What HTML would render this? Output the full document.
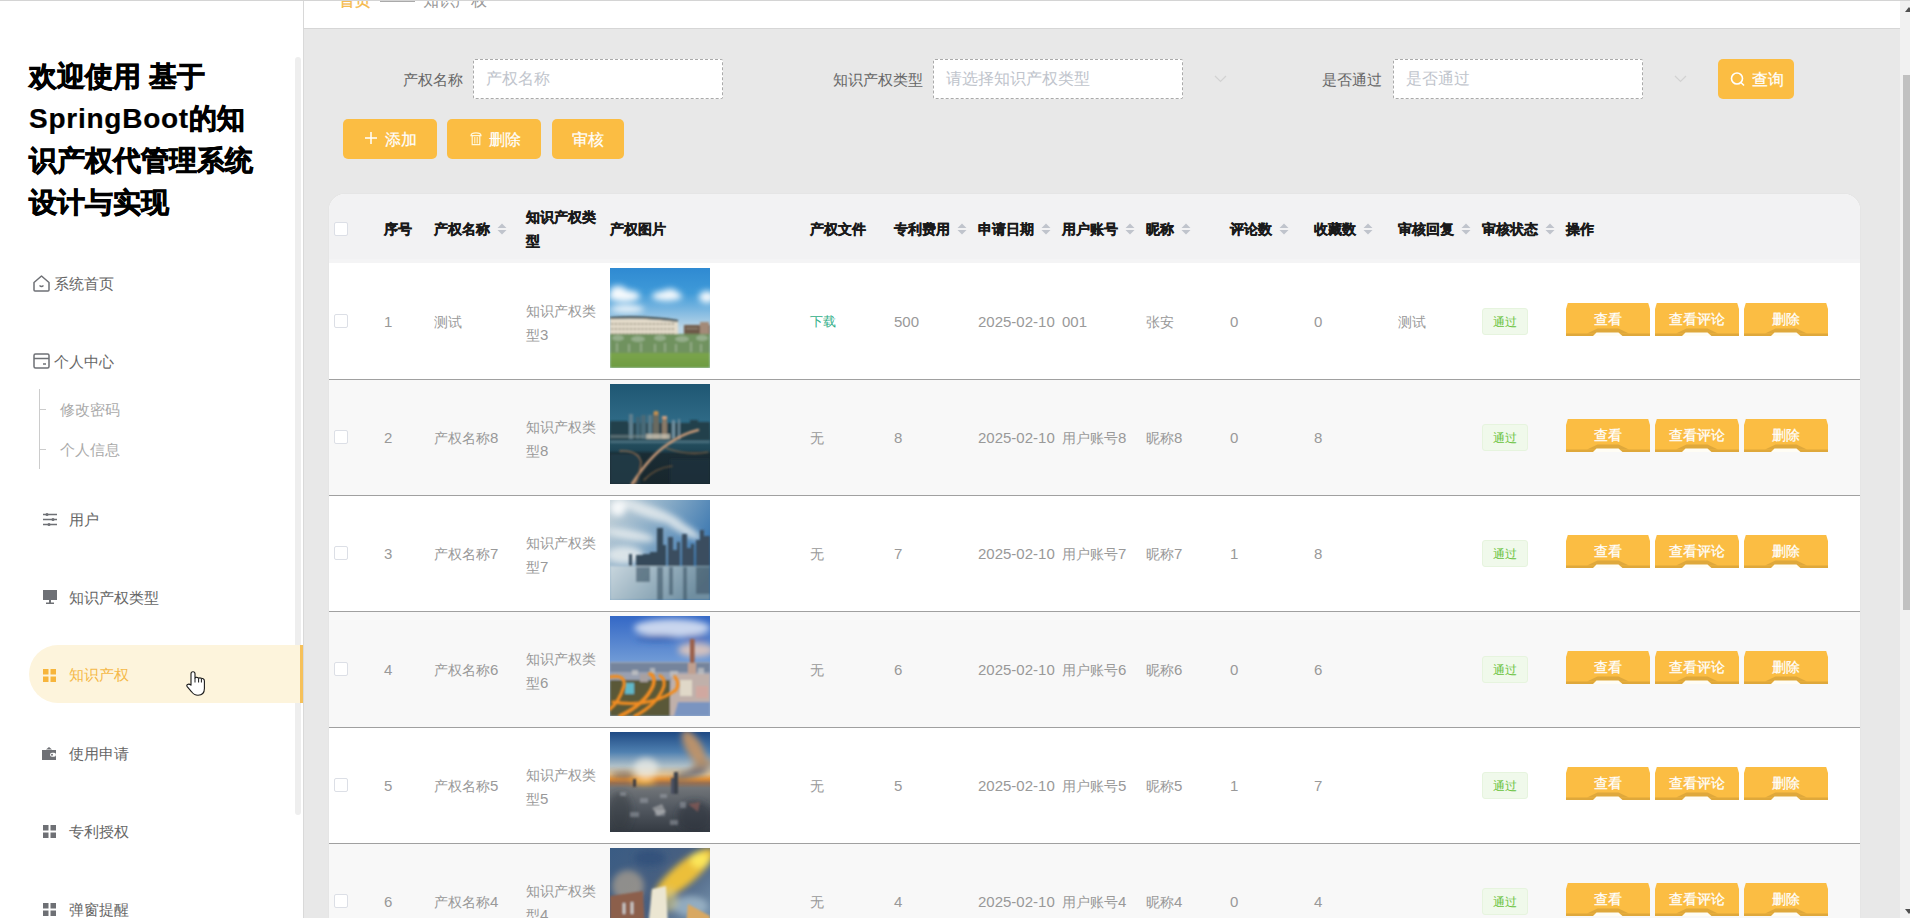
<!DOCTYPE html><html><head><meta charset="utf-8"><style>
*{margin:0;padding:0;box-sizing:border-box}
html,body{width:1910px;height:918px;overflow:hidden;background:#e8e8e8;font-family:"Liberation Sans",sans-serif}
.a{position:absolute;white-space:nowrap}
#side{position:absolute;left:0;top:0;width:303px;height:918px;background:#fff}
#topline{position:absolute;left:0;top:0;width:1910px;height:1px;background:#d4d4d4;z-index:5}
#crumb{position:absolute;left:303px;top:0;width:1597px;height:29px;background:#fff;border-left:1px solid #d8d8d8;border-bottom:1px solid #d6d6d6;overflow:hidden}
.title{left:29px;top:56px;font-size:28px;font-weight:bold;line-height:42px;color:#000;-webkit-text-stroke:0.7px #000}
.mi{font-size:15px;color:#666;line-height:20px}
.sub{font-size:15px;color:#aaa;line-height:20px}
.lbl{font-size:15px;color:#666;line-height:20px}
.inp{position:absolute;background:#fff;border:1px dashed #aaa;height:40px;width:250px;border-radius:2px}
.ph{font-size:16px;color:#c0c4cc;line-height:20px}
.btn{position:absolute;background:#fbbd43;border-radius:5px;height:40px;color:#fff;font-size:16px;line-height:40px}
#tbl{position:absolute;left:329px;top:194px;width:1531px;height:724px;background:#fff;border-radius:16px 16px 0 0;overflow:hidden;box-shadow:0 0 2px rgba(0,0,0,0.06)}
#thead{position:absolute;left:0;top:0;width:1531px;height:69px;background:#f2f2f3;border-bottom:4px solid #f4f4f5}
.th{font-size:14px;font-weight:bold;color:#1a1a1a;line-height:24px;-webkit-text-stroke:0.35px #1a1a1a}
.td{font-size:14px;color:#999;line-height:24px}
.d{font-size:15px}
.row{position:absolute;left:0;width:1531px;height:116px;border-top:1px solid #a0a0a0}
.row.s{background:#f8f8f8}
.cb{position:absolute;width:14px;height:14px;border:1px solid #dcdfe6;background:#fff;border-radius:2px}
.tag{position:absolute;width:46px;height:27px;background:#f0f9eb;border:1px solid #e6f4de;color:#67c23a;font-size:12px;line-height:27px;text-align:center;border-radius:3px}
</style></head><body>
<div id="topline"></div>
<div id="side"></div>
<div class="a title">欢迎使用 基于<br><span style="letter-spacing:0.75px;-webkit-text-stroke:0.2px #000">SpringBoot</span>的知<br>识产权代管理系统<br>设计与实现</div>
<div class="a" style="left:295px;top:57px;width:6px;height:758px;background:#eeeeee;border-radius:3px"></div>
<svg class="a" style="left:33px;top:275px" width="17" height="17" viewBox="0 0 17 17"><path d="M1 7.5 L8.5 1 L16 7.5 V15 a1 1 0 0 1 -1 1 H2 a1 1 0 0 1 -1 -1Z" fill="none" stroke="#6e7075" stroke-width="1.5" stroke-linejoin="round"/><path d="M6.5 10.5 Q8.5 12.5 10.5 10.5" fill="none" stroke="#6e7075" stroke-width="1.3"/></svg>
<div class="a mi" style="left:54px;top:274.0px;">系统首页</div>
<svg class="a" style="left:33px;top:353px" width="17" height="16" viewBox="0 0 17 16"><rect x="1" y="1" width="15" height="14" rx="1.5" fill="none" stroke="#6e7075" stroke-width="1.5"/><path d="M1 5.5 H16" stroke="#6e7075" stroke-width="1.5"/><path d="M10 11 H13" stroke="#6e7075" stroke-width="1.5"/></svg>
<div class="a mi" style="left:54px;top:352.0px;">个人中心</div>
<div class="a" style="left:39px;top:389px;width:1px;height:80px;background:#ccc"></div>
<div class="a" style="left:39px;top:409px;width:7px;height:1px;background:#ccc"></div>
<div class="a" style="left:39px;top:449px;width:7px;height:1px;background:#ccc"></div>
<div class="a sub" style="left:60px;top:400.0px;">修改密码</div>
<div class="a sub" style="left:60px;top:440.0px;">个人信息</div>
<svg class="a" style="left:43px;top:513px" width="14" height="13" viewBox="0 0 14 13"><path d="M0 1.5H14M0 6.5H14M0 11.5H14" stroke="#6e7075" stroke-width="1.3"/><circle cx="4" cy="1.5" r="1.5" fill="#6e7075"/><circle cx="10" cy="6.5" r="1.5" fill="#6e7075"/><circle cx="6" cy="11.5" r="1.5" fill="#6e7075"/></svg>
<div class="a mi" style="left:69px;top:510.0px;">用户</div>
<svg class="a" style="left:43px;top:590px" width="14" height="14" viewBox="0 0 14 14"><rect x="0" y="0" width="14" height="10" fill="#6e7075"/><rect x="6" y="10" width="2" height="3" fill="#6e7075"/><rect x="3" y="12.5" width="8" height="1.5" fill="#6e7075"/></svg>
<div class="a mi" style="left:69px;top:588.0px;">知识产权类型</div>
<div class="a" style="left:29px;top:645px;width:274px;height:58px;background:#fdf4dc;border-radius:29px 0 0 29px"></div>
<div class="a" style="left:300px;top:645px;width:3px;height:58px;background:#f6c15a"></div>
<svg class="a" style="left:43px;top:669px" width="13" height="13" viewBox="0 0 13 13"><rect x="0" y="0" width="5.5" height="5.5" fill="#f7b53b"/><rect x="7.5" y="0" width="5.5" height="5.5" fill="#f7b53b"/><rect x="0" y="7.5" width="5.5" height="5.5" fill="#f7b53b"/><rect x="7.5" y="7.5" width="5.5" height="5.5" fill="#f7b53b"/></svg>
<div class="a mi" style="left:69px;top:665.0px;color:#f5b949">知识产权</div>
<svg class="a" style="left:186px;top:671px" width="20" height="26" viewBox="0 0 20 26"><path d="M5 13 V2.8 a2 2 0 0 1 4 0 V7 Q9.5 6 11 6.4 Q12.3 6.7 12.6 7.2 Q13.8 6.6 15.2 7.2 Q16.2 7.1 17.2 7.8 Q18.4 8.5 18.4 10 V17.5 Q18.4 24.2 12 24.2 Q8 24.2 5.6 20.8 L1.2 15.6 Q0.2 14.2 1.6 13.4 Q3.2 12.6 5 14.2Z" fill="#fff" stroke="#1a1a1a" stroke-width="1.1" stroke-linejoin="round"/><path d="M9 7V11.5M12.6 7.3V11.5M15.4 7.5V11.5" stroke="#1a1a1a" stroke-width="1"/></svg>
<svg class="a" style="left:42px;top:746px" width="14" height="14" viewBox="0 0 14 14"><path d="M7 1 L10 3.5 H4Z" fill="#6e7075"/><rect x="0" y="4" width="14" height="10" fill="#6e7075"/><rect x="8" y="6.8" width="6" height="4" rx="2" fill="#fff"/><circle cx="10" cy="8.8" r="1" fill="#6e7075"/></svg>
<div class="a mi" style="left:69px;top:744.0px;">使用申请</div>
<svg class="a" style="left:43px;top:825px" width="13" height="13" viewBox="0 0 13 13"><rect x="0" y="0" width="5.5" height="5.5" fill="#6e7075"/><rect x="7.5" y="0" width="5.5" height="5.5" fill="#6e7075"/><rect x="0" y="7.5" width="5.5" height="5.5" fill="#6e7075"/><rect x="7.5" y="7.5" width="5.5" height="5.5" fill="#6e7075"/></svg>
<div class="a mi" style="left:69px;top:822.0px;">专利授权</div>
<svg class="a" style="left:43px;top:903px" width="13" height="13" viewBox="0 0 13 13"><rect x="0" y="0" width="5.5" height="5.5" fill="#6e7075"/><rect x="7.5" y="0" width="5.5" height="5.5" fill="#6e7075"/><rect x="0" y="7.5" width="5.5" height="5.5" fill="#6e7075"/><rect x="7.5" y="7.5" width="5.5" height="5.5" fill="#6e7075"/></svg>
<div class="a mi" style="left:69px;top:900.0px;">弹窗提醒</div>
<div class="a" style="left:303px;top:0;width:1px;height:918px;background:#d9d9d9"></div>
<div id="crumb"></div>
<div class="a mi" style="left:339px;top:-9.0px;font-size:16px;color:#f5b949;-webkit-text-stroke:0.3px #f5b949">首页</div>
<div class="a" style="left:380px;top:1px;width:35px;height:1px;background:#aaa"></div>
<div class="a mi" style="left:423px;top:-9.0px;font-size:16px;color:#999">知识产权</div>
<div class="a lbl" style="left:403px;top:70.0px;">产权名称</div>
<div class="inp" style="left:473px;top:59px"></div>
<div class="a ph" style="left:486px;top:69.0px;">产权名称</div>
<div class="a lbl" style="left:833px;top:70.0px;">知识产权类型</div>
<div class="inp" style="left:933px;top:59px"></div>
<div class="a ph" style="left:946px;top:69.0px;">请选择知识产权类型</div>
<svg class="a" style="left:1214px;top:75px" width="13" height="8" viewBox="0 0 13 8"><path d="M1 1 L6.5 6.5 L12 1" fill="none" stroke="#d2d2d2" stroke-width="1.2"/></svg>
<div class="a lbl" style="left:1322px;top:70.0px;">是否通过</div>
<div class="inp" style="left:1393px;top:59px"></div>
<div class="a ph" style="left:1406px;top:69.0px;">是否通过</div>
<svg class="a" style="left:1674px;top:75px" width="13" height="8" viewBox="0 0 13 8"><path d="M1 1 L6.5 6.5 L12 1" fill="none" stroke="#d2d2d2" stroke-width="1.2"/></svg>
<div class="btn" style="left:1718px;top:59px;width:76px"></div>
<svg class="a" style="left:1730px;top:71px" width="16" height="16" viewBox="0 0 16 16"><circle cx="7" cy="7.5" r="5.5" fill="none" stroke="#fff" stroke-width="1.6"/><path d="M11 11.5 L14 14.5" stroke="#fff" stroke-width="1.6"/></svg>
<div class="a mi" style="left:1752px;top:70.0px;font-size:16px;color:#fff;-webkit-text-stroke:0.2px #fff">查询</div>
<div class="btn" style="left:343px;top:119px;width:94px"></div>
<svg class="a" style="left:365px;top:132px" width="12" height="12" viewBox="0 0 12 12"><path d="M6 0V12M0 6H12" stroke="#fff" stroke-width="1.5"/></svg>
<div class="a mi" style="left:385px;top:130.0px;font-size:16px;color:#fff;-webkit-text-stroke:0.2px #fff">添加</div>
<div class="btn" style="left:447px;top:119px;width:94px"></div>
<svg class="a" style="left:470px;top:132px" width="12" height="14" viewBox="0 0 12 14"><path d="M1 3.6 Q1.2 0.9 6 0.9 Q10.8 0.9 11 3.6Z" fill="none" stroke="#fff8dc" stroke-width="1.2"/><path d="M2.2 4 V12.7 H9.8 V4" fill="none" stroke="#fff8dc" stroke-width="1.2"/><path d="M4.8 5V11.5M7.2 5V11.5" stroke="#fff8dc" stroke-width="1"/></svg>
<div class="a mi" style="left:489px;top:130.0px;font-size:16px;color:#fff;-webkit-text-stroke:0.2px #fff">删除</div>
<div class="btn" style="left:552px;top:119px;width:72px"></div>
<div class="a mi" style="left:572px;top:130.0px;font-size:16px;color:#fff;-webkit-text-stroke:0.2px #fff">审核</div>
<div id="tbl"><div id="thead"></div><div class="row" style="top:69px;border-top:none"></div><div class="row s" style="top:185px;"></div><div class="row" style="top:301px;"></div><div class="row s" style="top:417px;"></div><div class="row" style="top:533px;"></div><div class="row s" style="top:649px;"></div></div>
<div class="cb" style="left:334px;top:222px"></div>
<div class="a th" style="left:384px;top:217.0px;">序号</div>
<div class="a th" style="left:434px;top:217.0px;">产权名称</div>
<svg class="a" style="left:497px;top:223px" width="10" height="12" viewBox="0 0 10 12"><path d="M5 0.5 L9.5 5 L0.5 5Z M5 11.5 L9.5 7 L0.5 7Z" fill="#c0c4cc"/></svg>
<div class="a th" style="left:610px;top:217.0px;">产权图片</div>
<div class="a th" style="left:810px;top:217.0px;">产权文件</div>
<div class="a th" style="left:894px;top:217.0px;">专利费用</div>
<svg class="a" style="left:957px;top:223px" width="10" height="12" viewBox="0 0 10 12"><path d="M5 0.5 L9.5 5 L0.5 5Z M5 11.5 L9.5 7 L0.5 7Z" fill="#c0c4cc"/></svg>
<div class="a th" style="left:978px;top:217.0px;">申请日期</div>
<svg class="a" style="left:1041px;top:223px" width="10" height="12" viewBox="0 0 10 12"><path d="M5 0.5 L9.5 5 L0.5 5Z M5 11.5 L9.5 7 L0.5 7Z" fill="#c0c4cc"/></svg>
<div class="a th" style="left:1062px;top:217.0px;">用户账号</div>
<svg class="a" style="left:1125px;top:223px" width="10" height="12" viewBox="0 0 10 12"><path d="M5 0.5 L9.5 5 L0.5 5Z M5 11.5 L9.5 7 L0.5 7Z" fill="#c0c4cc"/></svg>
<div class="a th" style="left:1146px;top:217.0px;">昵称</div>
<svg class="a" style="left:1181px;top:223px" width="10" height="12" viewBox="0 0 10 12"><path d="M5 0.5 L9.5 5 L0.5 5Z M5 11.5 L9.5 7 L0.5 7Z" fill="#c0c4cc"/></svg>
<div class="a th" style="left:1230px;top:217.0px;">评论数</div>
<svg class="a" style="left:1279px;top:223px" width="10" height="12" viewBox="0 0 10 12"><path d="M5 0.5 L9.5 5 L0.5 5Z M5 11.5 L9.5 7 L0.5 7Z" fill="#c0c4cc"/></svg>
<div class="a th" style="left:1314px;top:217.0px;">收藏数</div>
<svg class="a" style="left:1363px;top:223px" width="10" height="12" viewBox="0 0 10 12"><path d="M5 0.5 L9.5 5 L0.5 5Z M5 11.5 L9.5 7 L0.5 7Z" fill="#c0c4cc"/></svg>
<div class="a th" style="left:1398px;top:217.0px;">审核回复</div>
<svg class="a" style="left:1461px;top:223px" width="10" height="12" viewBox="0 0 10 12"><path d="M5 0.5 L9.5 5 L0.5 5Z M5 11.5 L9.5 7 L0.5 7Z" fill="#c0c4cc"/></svg>
<div class="a th" style="left:1482px;top:217.0px;">审核状态</div>
<svg class="a" style="left:1545px;top:223px" width="10" height="12" viewBox="0 0 10 12"><path d="M5 0.5 L9.5 5 L0.5 5Z M5 11.5 L9.5 7 L0.5 7Z" fill="#c0c4cc"/></svg>
<div class="a th" style="left:1566px;top:217.0px;">操作</div>
<div class="a th" style="left:526px;top:205px;white-space:normal;width:72px">知识产权类型</div>
<div class="cb" style="left:334px;top:314px"></div>
<div class="a td" style="left:384px;top:310.0px;"><span class="d">1</span></div>
<div class="a td" style="left:434px;top:310.0px;">测试</div>
<div class="a td" style="left:526px;top:299px;white-space:normal;width:72px">知识产权类<br>型<span class="d">3</span></div>
<div class="a" style="left:610px;top:268px;width:100px;height:100px"><svg width="100" height="100" viewBox="0 0 100 100" style="display:block"><defs><filter id="b1" x="-20%" y="-20%" width="140%" height="140%"><feGaussianBlur stdDeviation="1.2"/></filter><filter id="c1" x="-50%" y="-50%" width="200%" height="200%"><feGaussianBlur stdDeviation="3"/></filter><linearGradient id="s1" x1="0" y1="0" x2="0" y2="1"><stop offset="0" stop-color="#2f8ad2"/><stop offset="0.25" stop-color="#3f9ad8"/><stop offset="0.45" stop-color="#86bce2"/><stop offset="0.6" stop-color="#bcd6e6"/></linearGradient><linearGradient id="g1" x1="0" y1="0" x2="0" y2="1"><stop offset="0" stop-color="#7aa44a"/><stop offset="1" stop-color="#6f9c42"/></linearGradient></defs><rect width="100" height="100" fill="url(#s1)"/><g filter="url(#c1)" fill="#fff" opacity="0.95"><ellipse cx="14" cy="28" rx="16" ry="6"/><ellipse cx="8" cy="22" rx="8" ry="4"/><ellipse cx="57" cy="28" rx="15" ry="5"/><ellipse cx="60" cy="24" rx="7" ry="3"/><ellipse cx="97" cy="29" rx="8" ry="6"/><ellipse cx="17" cy="41" rx="17" ry="3.5"/></g><g filter="url(#b1)"><path d="M0 51 Q35 49 68 54 V71 H0Z" fill="#e4dccb"/><path d="M0 50 Q35 48 68 53" fill="none" stroke="#3b4444" stroke-width="2.2"/><path d="M1 56 H65 M1 61 H65 M1 66 H65" stroke="#8e8676" stroke-width="1.4" stroke-dasharray="2.2 1.6"/><rect x="74" y="57" width="26" height="14" fill="#6e5a4a"/><rect x="90" y="54" width="9" height="16" fill="#a38a78"/><rect x="76" y="60" width="12" height="1" fill="#9a8a7a"/><rect x="0" y="66" width="100" height="19" fill="#70925f"/><g fill="#9fb596" opacity="0.8"><ellipse cx="8" cy="70" rx="6" ry="3"/><ellipse cx="28" cy="71" rx="7" ry="3"/><ellipse cx="50" cy="70" rx="6" ry="3"/><ellipse cx="72" cy="71" rx="7" ry="3"/><ellipse cx="92" cy="70" rx="6" ry="3"/></g><path d="M7 75V84M19 76V84M31 75V84M45 76V84M55 75V84M66 76V84M81 74V84M91 76V84" stroke="#c8d0c0" stroke-width="0.8"/><rect x="0" y="85" width="100" height="15" fill="url(#g1)"/></g></svg></div>
<div class="a td" style="left:810px;top:310.0px;color:#2fae87;font-size:13px">下载</div>
<div class="a td" style="left:894px;top:310.0px;"><span class="d">500</span></div>
<div class="a td" style="left:978px;top:310.0px;"><span class="d">2025-02-10</span></div>
<div class="a td" style="left:1062px;top:310.0px;"><span class="d">001</span></div>
<div class="a td" style="left:1146px;top:310.0px;">张安</div>
<div class="a td" style="left:1230px;top:310.0px;"><span class="d">0</span></div>
<div class="a td" style="left:1314px;top:310.0px;"><span class="d">0</span></div>
<div class="a td" style="left:1398px;top:310.0px;">测试</div>
<div class="tag" style="left:1482px;top:308px">通过</div>
<svg class="a" style="left:1566px;top:303px" width="84" height="33" viewBox="0 0 84 33"><path d="M1.8 0 H82.2 L84 6 V33 H0 V6Z" fill="#fbbd43"/><path d="M0 30.5 H84 V33 H0Z" fill="#dfa83b"/><path d="M21 30.6 L31.5 25.4 H52.5 L63 30.6Z" fill="#dfa83b"/><path d="M27 33 L30.5 29.6 H52.5 L56.5 33Z" fill="#fffdf5"/></svg>
<div class="a" style="left:1566px;top:309px;width:84px;text-align:center;font-size:14px;line-height:20px;color:#fff;-webkit-text-stroke:0.25px #fff">查看</div>
<svg class="a" style="left:1655px;top:303px" width="84" height="33" viewBox="0 0 84 33"><path d="M1.8 0 H82.2 L84 6 V33 H0 V6Z" fill="#fbbd43"/><path d="M0 30.5 H84 V33 H0Z" fill="#dfa83b"/><path d="M21 30.6 L31.5 25.4 H52.5 L63 30.6Z" fill="#dfa83b"/><path d="M27 33 L30.5 29.6 H52.5 L56.5 33Z" fill="#fffdf5"/></svg>
<div class="a" style="left:1655px;top:309px;width:84px;text-align:center;font-size:14px;line-height:20px;color:#fff;-webkit-text-stroke:0.25px #fff">查看评论</div>
<svg class="a" style="left:1744px;top:303px" width="84" height="33" viewBox="0 0 84 33"><path d="M1.8 0 H82.2 L84 6 V33 H0 V6Z" fill="#fbbd43"/><path d="M0 30.5 H84 V33 H0Z" fill="#dfa83b"/><path d="M21 30.6 L31.5 25.4 H52.5 L63 30.6Z" fill="#dfa83b"/><path d="M27 33 L30.5 29.6 H52.5 L56.5 33Z" fill="#fffdf5"/></svg>
<div class="a" style="left:1744px;top:309px;width:84px;text-align:center;font-size:14px;line-height:20px;color:#fff;-webkit-text-stroke:0.25px #fff">删除</div>
<div class="cb" style="left:334px;top:430px"></div>
<div class="a td" style="left:384px;top:426.0px;"><span class="d">2</span></div>
<div class="a td" style="left:434px;top:426.0px;">产权名称<span class="d">8</span></div>
<div class="a td" style="left:526px;top:415px;white-space:normal;width:72px">知识产权类<br>型<span class="d">8</span></div>
<div class="a" style="left:610px;top:384px;width:100px;height:100px"><svg width="100" height="100" viewBox="0 0 100 100" style="display:block"><defs><filter id="b2" x="-20%" y="-20%" width="140%" height="140%"><feGaussianBlur stdDeviation="1.2"/></filter><filter id="c2" x="-50%" y="-50%" width="200%" height="200%"><feGaussianBlur stdDeviation="3"/></filter><linearGradient id="s2" x1="0" y1="0" x2="0" y2="1"><stop offset="0" stop-color="#1f5773"/><stop offset="0.38" stop-color="#2f6a86"/><stop offset="0.5" stop-color="#2a5868"/><stop offset="0.66" stop-color="#1f4656"/><stop offset="0.7" stop-color="#1a2c34"/><stop offset="1" stop-color="#18262c"/></linearGradient></defs><rect width="100" height="100" fill="url(#s2)"/><g filter="url(#b2)"><path d="M0 37 H18 V39 H80 V36 H88 V38 H100 V56 H0Z" fill="#21404b"/><rect x="19" y="30" width="4" height="25" fill="#5f7f8e"/><rect x="26" y="33" width="4" height="22" fill="#3f6575"/><rect x="31" y="31" width="5" height="24" fill="#4a6a78"/><rect x="38" y="31" width="4" height="24" fill="#5a7a88"/><rect x="43" y="28" width="6" height="27" fill="#6a6a60"/><rect x="44" y="27" width="4" height="4" fill="#c09050"/><rect x="52" y="33" width="5" height="22" fill="#8a7a68"/><rect x="52" y="32" width="5" height="3" fill="#d0a080"/><rect x="62" y="36" width="3" height="19" fill="#7090a0"/><rect x="68" y="35" width="2" height="20" fill="#6a8898"/><rect x="36" y="50" width="24" height="5" fill="#c8c0b0" opacity="0.8"/><rect x="0" y="51" width="35" height="3" fill="#7a8a8a" opacity="0.6"/><rect x="0" y="57" width="100" height="2" fill="#6a8a98" opacity="0.6"/><rect x="0" y="70" width="30" height="30" fill="#24404c" opacity="0.7"/><rect x="60" y="75" width="40" height="25" fill="#203440" opacity="0.6"/></g><g filter="url(#b2)" fill="none" stroke-linecap="round"><path d="M22 100 Q40 72 58 60 Q72 50 88 46" stroke="#c89a78" stroke-width="2.6"/><path d="M10 67 Q28 66 31 78 Q30 90 25 100" stroke="#9a7050" stroke-width="1.3"/><path d="M56 64 Q78 72 98 68" stroke="#8a6848" stroke-width="1.2"/><path d="M34 96 Q45 84 62 82" stroke="#806040" stroke-width="1.2"/></g></svg></div>
<div class="a td" style="left:810px;top:426.0px;">无</div>
<div class="a td" style="left:894px;top:426.0px;"><span class="d">8</span></div>
<div class="a td" style="left:978px;top:426.0px;"><span class="d">2025-02-10</span></div>
<div class="a td" style="left:1062px;top:426.0px;">用户账号<span class="d">8</span></div>
<div class="a td" style="left:1146px;top:426.0px;">昵称<span class="d">8</span></div>
<div class="a td" style="left:1230px;top:426.0px;"><span class="d">0</span></div>
<div class="a td" style="left:1314px;top:426.0px;"><span class="d">8</span></div>
<div class="tag" style="left:1482px;top:424px">通过</div>
<svg class="a" style="left:1566px;top:419px" width="84" height="33" viewBox="0 0 84 33"><path d="M1.8 0 H82.2 L84 6 V33 H0 V6Z" fill="#fbbd43"/><path d="M0 30.5 H84 V33 H0Z" fill="#dfa83b"/><path d="M21 30.6 L31.5 25.4 H52.5 L63 30.6Z" fill="#dfa83b"/><path d="M27 33 L30.5 29.6 H52.5 L56.5 33Z" fill="#fffdf5"/></svg>
<div class="a" style="left:1566px;top:425px;width:84px;text-align:center;font-size:14px;line-height:20px;color:#fff;-webkit-text-stroke:0.25px #fff">查看</div>
<svg class="a" style="left:1655px;top:419px" width="84" height="33" viewBox="0 0 84 33"><path d="M1.8 0 H82.2 L84 6 V33 H0 V6Z" fill="#fbbd43"/><path d="M0 30.5 H84 V33 H0Z" fill="#dfa83b"/><path d="M21 30.6 L31.5 25.4 H52.5 L63 30.6Z" fill="#dfa83b"/><path d="M27 33 L30.5 29.6 H52.5 L56.5 33Z" fill="#fffdf5"/></svg>
<div class="a" style="left:1655px;top:425px;width:84px;text-align:center;font-size:14px;line-height:20px;color:#fff;-webkit-text-stroke:0.25px #fff">查看评论</div>
<svg class="a" style="left:1744px;top:419px" width="84" height="33" viewBox="0 0 84 33"><path d="M1.8 0 H82.2 L84 6 V33 H0 V6Z" fill="#fbbd43"/><path d="M0 30.5 H84 V33 H0Z" fill="#dfa83b"/><path d="M21 30.6 L31.5 25.4 H52.5 L63 30.6Z" fill="#dfa83b"/><path d="M27 33 L30.5 29.6 H52.5 L56.5 33Z" fill="#fffdf5"/></svg>
<div class="a" style="left:1744px;top:425px;width:84px;text-align:center;font-size:14px;line-height:20px;color:#fff;-webkit-text-stroke:0.25px #fff">删除</div>
<div class="cb" style="left:334px;top:546px"></div>
<div class="a td" style="left:384px;top:542.0px;"><span class="d">3</span></div>
<div class="a td" style="left:434px;top:542.0px;">产权名称<span class="d">7</span></div>
<div class="a td" style="left:526px;top:531px;white-space:normal;width:72px">知识产权类<br>型<span class="d">7</span></div>
<div class="a" style="left:610px;top:500px;width:100px;height:100px"><svg width="100" height="100" viewBox="0 0 100 100" style="display:block"><defs><filter id="b3" x="-20%" y="-20%" width="140%" height="140%"><feGaussianBlur stdDeviation="1.2"/></filter><filter id="c3" x="-50%" y="-50%" width="200%" height="200%"><feGaussianBlur stdDeviation="3"/></filter><linearGradient id="s3" x1="0" y1="0" x2="1" y2="0.6"><stop offset="0" stop-color="#c8d4da"/><stop offset="0.45" stop-color="#86aac6"/><stop offset="1" stop-color="#2e6eac"/></linearGradient><linearGradient id="w3" x1="0" y1="0" x2="1" y2="0.3"><stop offset="0" stop-color="#c8d6de"/><stop offset="0.5" stop-color="#9ab2c0"/><stop offset="1" stop-color="#6f8ea0"/></linearGradient></defs><rect width="100" height="100" fill="url(#s3)"/><g filter="url(#c3)" fill="#e6ecee" opacity="0.85"><ellipse cx="40" cy="12" rx="35" ry="6" transform="rotate(20 40 12)"/><ellipse cx="20" cy="35" rx="25" ry="5" transform="rotate(10 20 35)"/><ellipse cx="72" cy="28" rx="22" ry="5" transform="rotate(30 72 28)"/><ellipse cx="8" cy="8" rx="8" ry="8" fill="#fff"/><ellipse cx="15" cy="55" rx="18" ry="9"/></g><g filter="url(#b3)"><path d="M19 66 V54 H22 V66Z M26 66 V55 H33 V54 H40 V52 H47 V28 H53 V45 H56 V66Z" fill="#34495a"/><path d="M58 66 V37 H63 V50 H67 V42 H70 V66Z M72 66 V34 H77 V48 H81 V44 H84 V66Z M86 66 V40 H90 V30 H94 V36 H100 V66Z" fill="#3a4e5e"/><rect x="0" y="66" width="100" height="34" fill="url(#w3)"/><path d="M26 67 H40 V82 H26Z M47 67 H53 V100 H47Z M59 67 H63 V95 H59Z M73 67 H77 V100 H73Z M86 67 H100 V94 H86Z" fill="#40596a" opacity="0.65"/></g></svg></div>
<div class="a td" style="left:810px;top:542.0px;">无</div>
<div class="a td" style="left:894px;top:542.0px;"><span class="d">7</span></div>
<div class="a td" style="left:978px;top:542.0px;"><span class="d">2025-02-10</span></div>
<div class="a td" style="left:1062px;top:542.0px;">用户账号<span class="d">7</span></div>
<div class="a td" style="left:1146px;top:542.0px;">昵称<span class="d">7</span></div>
<div class="a td" style="left:1230px;top:542.0px;"><span class="d">1</span></div>
<div class="a td" style="left:1314px;top:542.0px;"><span class="d">8</span></div>
<div class="tag" style="left:1482px;top:540px">通过</div>
<svg class="a" style="left:1566px;top:535px" width="84" height="33" viewBox="0 0 84 33"><path d="M1.8 0 H82.2 L84 6 V33 H0 V6Z" fill="#fbbd43"/><path d="M0 30.5 H84 V33 H0Z" fill="#dfa83b"/><path d="M21 30.6 L31.5 25.4 H52.5 L63 30.6Z" fill="#dfa83b"/><path d="M27 33 L30.5 29.6 H52.5 L56.5 33Z" fill="#fffdf5"/></svg>
<div class="a" style="left:1566px;top:541px;width:84px;text-align:center;font-size:14px;line-height:20px;color:#fff;-webkit-text-stroke:0.25px #fff">查看</div>
<svg class="a" style="left:1655px;top:535px" width="84" height="33" viewBox="0 0 84 33"><path d="M1.8 0 H82.2 L84 6 V33 H0 V6Z" fill="#fbbd43"/><path d="M0 30.5 H84 V33 H0Z" fill="#dfa83b"/><path d="M21 30.6 L31.5 25.4 H52.5 L63 30.6Z" fill="#dfa83b"/><path d="M27 33 L30.5 29.6 H52.5 L56.5 33Z" fill="#fffdf5"/></svg>
<div class="a" style="left:1655px;top:541px;width:84px;text-align:center;font-size:14px;line-height:20px;color:#fff;-webkit-text-stroke:0.25px #fff">查看评论</div>
<svg class="a" style="left:1744px;top:535px" width="84" height="33" viewBox="0 0 84 33"><path d="M1.8 0 H82.2 L84 6 V33 H0 V6Z" fill="#fbbd43"/><path d="M0 30.5 H84 V33 H0Z" fill="#dfa83b"/><path d="M21 30.6 L31.5 25.4 H52.5 L63 30.6Z" fill="#dfa83b"/><path d="M27 33 L30.5 29.6 H52.5 L56.5 33Z" fill="#fffdf5"/></svg>
<div class="a" style="left:1744px;top:541px;width:84px;text-align:center;font-size:14px;line-height:20px;color:#fff;-webkit-text-stroke:0.25px #fff">删除</div>
<div class="cb" style="left:334px;top:662px"></div>
<div class="a td" style="left:384px;top:658.0px;"><span class="d">4</span></div>
<div class="a td" style="left:434px;top:658.0px;">产权名称<span class="d">6</span></div>
<div class="a td" style="left:526px;top:647px;white-space:normal;width:72px">知识产权类<br>型<span class="d">6</span></div>
<div class="a" style="left:610px;top:616px;width:100px;height:100px"><svg width="100" height="100" viewBox="0 0 100 100" style="display:block"><defs><filter id="b4" x="-20%" y="-20%" width="140%" height="140%"><feGaussianBlur stdDeviation="1.2"/></filter><filter id="c4" x="-50%" y="-50%" width="200%" height="200%"><feGaussianBlur stdDeviation="3"/></filter><linearGradient id="s4" x1="0" y1="0" x2="0" y2="1"><stop offset="0" stop-color="#3468c6"/><stop offset="0.45" stop-color="#6f9ad6"/><stop offset="0.5" stop-color="#98aed0"/></linearGradient></defs><rect width="100" height="100" fill="url(#s4)"/><g filter="url(#c4)"><ellipse cx="62" cy="12" rx="38" ry="9" fill="#dfe6f4" opacity="0.85"/><ellipse cx="86" cy="34" rx="18" ry="7" fill="#e8cabb" opacity="0.85"/><ellipse cx="48" cy="22" rx="22" ry="3" fill="#2e5eb0"/><ellipse cx="85" cy="22" rx="14" ry="3" fill="#4a6ab8"/></g><g filter="url(#b4)"><rect x="0" y="46" width="100" height="54" fill="#9aa0b0"/><path d="M0 47 H100 V56 H0Z" fill="#74849c"/><g fill="#c8c8c8" opacity="0.7"><rect x="22" y="54" width="6" height="5"/><rect x="40" y="52" width="5" height="6"/><rect x="60" y="55" width="8" height="6"/><rect x="88" y="52" width="6" height="8"/></g><rect x="80" y="23" width="4.5" height="32" fill="#9a5e48"/><rect x="78" y="47" width="8" height="12" fill="#c0a090"/><path d="M62 58 H100 V100 H58Z" fill="#c0b0aa"/><path d="M70 64 H82 V80 H70Z" fill="#e0d8c8"/><path d="M86 70 H98 V82 H86Z" fill="#d0a8a0"/><path d="M68 86 H100 V100 H64Z" fill="#7a94c0"/><path d="M0 64 H60 V100 H0Z" fill="#5a5838"/><rect x="15" y="67" width="9" height="11" fill="#60b8c8"/><rect x="30" y="58" width="8" height="8" fill="#a8a0a0"/></g><g filter="url(#b4)" fill="none" stroke="#f08c22" stroke-linecap="round"><path d="M0 61 Q16 58 14 70 Q9 86 0 93" stroke-width="3.2"/><path d="M10 100 Q35 88 43 70 Q46 60 40 58" stroke-width="3.8"/><path d="M25 100 Q48 88 54 70 Q55 62 50 60" stroke-width="3.2"/><path d="M3 86 Q40 92 66 74 Q70 67 65 61" stroke-width="3.2"/></g></svg></div>
<div class="a td" style="left:810px;top:658.0px;">无</div>
<div class="a td" style="left:894px;top:658.0px;"><span class="d">6</span></div>
<div class="a td" style="left:978px;top:658.0px;"><span class="d">2025-02-10</span></div>
<div class="a td" style="left:1062px;top:658.0px;">用户账号<span class="d">6</span></div>
<div class="a td" style="left:1146px;top:658.0px;">昵称<span class="d">6</span></div>
<div class="a td" style="left:1230px;top:658.0px;"><span class="d">0</span></div>
<div class="a td" style="left:1314px;top:658.0px;"><span class="d">6</span></div>
<div class="tag" style="left:1482px;top:656px">通过</div>
<svg class="a" style="left:1566px;top:651px" width="84" height="33" viewBox="0 0 84 33"><path d="M1.8 0 H82.2 L84 6 V33 H0 V6Z" fill="#fbbd43"/><path d="M0 30.5 H84 V33 H0Z" fill="#dfa83b"/><path d="M21 30.6 L31.5 25.4 H52.5 L63 30.6Z" fill="#dfa83b"/><path d="M27 33 L30.5 29.6 H52.5 L56.5 33Z" fill="#fffdf5"/></svg>
<div class="a" style="left:1566px;top:657px;width:84px;text-align:center;font-size:14px;line-height:20px;color:#fff;-webkit-text-stroke:0.25px #fff">查看</div>
<svg class="a" style="left:1655px;top:651px" width="84" height="33" viewBox="0 0 84 33"><path d="M1.8 0 H82.2 L84 6 V33 H0 V6Z" fill="#fbbd43"/><path d="M0 30.5 H84 V33 H0Z" fill="#dfa83b"/><path d="M21 30.6 L31.5 25.4 H52.5 L63 30.6Z" fill="#dfa83b"/><path d="M27 33 L30.5 29.6 H52.5 L56.5 33Z" fill="#fffdf5"/></svg>
<div class="a" style="left:1655px;top:657px;width:84px;text-align:center;font-size:14px;line-height:20px;color:#fff;-webkit-text-stroke:0.25px #fff">查看评论</div>
<svg class="a" style="left:1744px;top:651px" width="84" height="33" viewBox="0 0 84 33"><path d="M1.8 0 H82.2 L84 6 V33 H0 V6Z" fill="#fbbd43"/><path d="M0 30.5 H84 V33 H0Z" fill="#dfa83b"/><path d="M21 30.6 L31.5 25.4 H52.5 L63 30.6Z" fill="#dfa83b"/><path d="M27 33 L30.5 29.6 H52.5 L56.5 33Z" fill="#fffdf5"/></svg>
<div class="a" style="left:1744px;top:657px;width:84px;text-align:center;font-size:14px;line-height:20px;color:#fff;-webkit-text-stroke:0.25px #fff">删除</div>
<div class="cb" style="left:334px;top:778px"></div>
<div class="a td" style="left:384px;top:774.0px;"><span class="d">5</span></div>
<div class="a td" style="left:434px;top:774.0px;">产权名称<span class="d">5</span></div>
<div class="a td" style="left:526px;top:763px;white-space:normal;width:72px">知识产权类<br>型<span class="d">5</span></div>
<div class="a" style="left:610px;top:732px;width:100px;height:100px"><svg width="100" height="100" viewBox="0 0 100 100" style="display:block"><defs><filter id="b5" x="-20%" y="-20%" width="140%" height="140%"><feGaussianBlur stdDeviation="1.2"/></filter><filter id="c5" x="-50%" y="-50%" width="200%" height="200%"><feGaussianBlur stdDeviation="3"/></filter><linearGradient id="s5" x1="0" y1="0" x2="0" y2="1"><stop offset="0" stop-color="#1f4a84"/><stop offset="0.2" stop-color="#4f80b0"/><stop offset="0.34" stop-color="#b0c0c8"/><stop offset="0.42" stop-color="#e0c090"/><stop offset="0.47" stop-color="#e09038"/><stop offset="0.51" stop-color="#9a7050"/><stop offset="0.56" stop-color="#707478"/><stop offset="0.75" stop-color="#545a62"/><stop offset="1" stop-color="#343a42"/></linearGradient></defs><rect width="100" height="100" fill="url(#s5)"/><g filter="url(#c5)"><ellipse cx="36" cy="36" rx="12" ry="10" fill="#f0f0e8" opacity="0.7"/><ellipse cx="84" cy="16" rx="20" ry="8" transform="rotate(60 84 16)" fill="#c09468" opacity="0.95"/><ellipse cx="92" cy="34" rx="12" ry="6" transform="rotate(-20 92 34)" fill="#a88868" opacity="0.8"/><ellipse cx="80" cy="42" rx="18" ry="4" transform="rotate(-15 80 42)" fill="#5a6478" opacity="0.8"/><ellipse cx="34" cy="49" rx="12" ry="3" fill="#ffc040"/><ellipse cx="14" cy="43" rx="13" ry="2.5" fill="#504850" opacity="0.8"/><ellipse cx="85" cy="85" rx="18" ry="16" fill="#2e343c" opacity="0.6"/><ellipse cx="10" cy="80" rx="12" ry="20" fill="#30363e" opacity="0.5"/></g><g filter="url(#b5)"><rect x="64" y="40" width="4" height="22" fill="#3a404a"/><rect x="61" y="46" width="3" height="16" fill="#4a5060"/><rect x="23" y="47" width="3" height="8" fill="#3a3a40"/><g fill="#a8aeb6" opacity="0.45"><rect x="10" y="60" width="6" height="4"/><rect x="30" y="66" width="8" height="5"/><rect x="50" y="62" width="7" height="4"/><rect x="70" y="70" width="6" height="6"/><rect x="20" y="80" width="9" height="5"/><rect x="45" y="78" width="10" height="6"/><rect x="60" y="88" width="8" height="5"/></g><path d="M42 76 L52 72 L56 80 L48 84Z" fill="#c8c8c8" opacity="0.5"/><path d="M78 72 L90 70 L88 80Z" fill="#9a6058" opacity="0.6"/></g></svg></div>
<div class="a td" style="left:810px;top:774.0px;">无</div>
<div class="a td" style="left:894px;top:774.0px;"><span class="d">5</span></div>
<div class="a td" style="left:978px;top:774.0px;"><span class="d">2025-02-10</span></div>
<div class="a td" style="left:1062px;top:774.0px;">用户账号<span class="d">5</span></div>
<div class="a td" style="left:1146px;top:774.0px;">昵称<span class="d">5</span></div>
<div class="a td" style="left:1230px;top:774.0px;"><span class="d">1</span></div>
<div class="a td" style="left:1314px;top:774.0px;"><span class="d">7</span></div>
<div class="tag" style="left:1482px;top:772px">通过</div>
<svg class="a" style="left:1566px;top:767px" width="84" height="33" viewBox="0 0 84 33"><path d="M1.8 0 H82.2 L84 6 V33 H0 V6Z" fill="#fbbd43"/><path d="M0 30.5 H84 V33 H0Z" fill="#dfa83b"/><path d="M21 30.6 L31.5 25.4 H52.5 L63 30.6Z" fill="#dfa83b"/><path d="M27 33 L30.5 29.6 H52.5 L56.5 33Z" fill="#fffdf5"/></svg>
<div class="a" style="left:1566px;top:773px;width:84px;text-align:center;font-size:14px;line-height:20px;color:#fff;-webkit-text-stroke:0.25px #fff">查看</div>
<svg class="a" style="left:1655px;top:767px" width="84" height="33" viewBox="0 0 84 33"><path d="M1.8 0 H82.2 L84 6 V33 H0 V6Z" fill="#fbbd43"/><path d="M0 30.5 H84 V33 H0Z" fill="#dfa83b"/><path d="M21 30.6 L31.5 25.4 H52.5 L63 30.6Z" fill="#dfa83b"/><path d="M27 33 L30.5 29.6 H52.5 L56.5 33Z" fill="#fffdf5"/></svg>
<div class="a" style="left:1655px;top:773px;width:84px;text-align:center;font-size:14px;line-height:20px;color:#fff;-webkit-text-stroke:0.25px #fff">查看评论</div>
<svg class="a" style="left:1744px;top:767px" width="84" height="33" viewBox="0 0 84 33"><path d="M1.8 0 H82.2 L84 6 V33 H0 V6Z" fill="#fbbd43"/><path d="M0 30.5 H84 V33 H0Z" fill="#dfa83b"/><path d="M21 30.6 L31.5 25.4 H52.5 L63 30.6Z" fill="#dfa83b"/><path d="M27 33 L30.5 29.6 H52.5 L56.5 33Z" fill="#fffdf5"/></svg>
<div class="a" style="left:1744px;top:773px;width:84px;text-align:center;font-size:14px;line-height:20px;color:#fff;-webkit-text-stroke:0.25px #fff">删除</div>
<div class="cb" style="left:334px;top:894px"></div>
<div class="a td" style="left:384px;top:890.0px;"><span class="d">6</span></div>
<div class="a td" style="left:434px;top:890.0px;">产权名称<span class="d">4</span></div>
<div class="a td" style="left:526px;top:879px;white-space:normal;width:72px">知识产权类<br>型<span class="d">4</span></div>
<div class="a" style="left:610px;top:848px;width:100px;height:100px"><svg width="100" height="100" viewBox="0 0 100 100" style="display:block"><defs><filter id="b6" x="-20%" y="-20%" width="140%" height="140%"><feGaussianBlur stdDeviation="1.2"/></filter><filter id="c6" x="-50%" y="-50%" width="200%" height="200%"><feGaussianBlur stdDeviation="3"/></filter><linearGradient id="s6" x1="0" y1="0" x2="1" y2="1"><stop offset="0" stop-color="#3a5c84"/><stop offset="0.5" stop-color="#4a6080"/><stop offset="1" stop-color="#88a8c0"/></linearGradient></defs><rect width="100" height="100" fill="url(#s6)"/><g filter="url(#c6)"><ellipse cx="74" cy="26" rx="38" ry="11" transform="rotate(-40 74 26)" fill="#f4c436" opacity="0.95"/><ellipse cx="90" cy="12" rx="10" ry="8" fill="#fff060" opacity="0.8"/><ellipse cx="18" cy="38" rx="16" ry="16" fill="#b8a890" opacity="0.65"/><ellipse cx="80" cy="58" rx="18" ry="10" fill="#a8c0d0" opacity="0.7"/><ellipse cx="58" cy="52" rx="10" ry="12" fill="#d0c888" opacity="0.6"/><ellipse cx="40" cy="10" rx="16" ry="8" fill="#30507a" opacity="0.8"/></g><g filter="url(#b6)"><path d="M0 48 L33 43 L36 100 H0Z" fill="#8c5e4c"/><path d="M14 55 V66 M22 54 V66" stroke="#d0d0d0" stroke-width="2.5"/><path d="M36 100 L42 41 L56 38 L59 100Z" fill="#ebe6d2"/><path d="M78 56 L100 68 V100 H74Z" fill="#d8a862"/></g></svg></div>
<div class="a td" style="left:810px;top:890.0px;">无</div>
<div class="a td" style="left:894px;top:890.0px;"><span class="d">4</span></div>
<div class="a td" style="left:978px;top:890.0px;"><span class="d">2025-02-10</span></div>
<div class="a td" style="left:1062px;top:890.0px;">用户账号<span class="d">4</span></div>
<div class="a td" style="left:1146px;top:890.0px;">昵称<span class="d">4</span></div>
<div class="a td" style="left:1230px;top:890.0px;"><span class="d">0</span></div>
<div class="a td" style="left:1314px;top:890.0px;"><span class="d">4</span></div>
<div class="tag" style="left:1482px;top:888px">通过</div>
<svg class="a" style="left:1566px;top:883px" width="84" height="33" viewBox="0 0 84 33"><path d="M1.8 0 H82.2 L84 6 V33 H0 V6Z" fill="#fbbd43"/><path d="M0 30.5 H84 V33 H0Z" fill="#dfa83b"/><path d="M21 30.6 L31.5 25.4 H52.5 L63 30.6Z" fill="#dfa83b"/><path d="M27 33 L30.5 29.6 H52.5 L56.5 33Z" fill="#fffdf5"/></svg>
<div class="a" style="left:1566px;top:889px;width:84px;text-align:center;font-size:14px;line-height:20px;color:#fff;-webkit-text-stroke:0.25px #fff">查看</div>
<svg class="a" style="left:1655px;top:883px" width="84" height="33" viewBox="0 0 84 33"><path d="M1.8 0 H82.2 L84 6 V33 H0 V6Z" fill="#fbbd43"/><path d="M0 30.5 H84 V33 H0Z" fill="#dfa83b"/><path d="M21 30.6 L31.5 25.4 H52.5 L63 30.6Z" fill="#dfa83b"/><path d="M27 33 L30.5 29.6 H52.5 L56.5 33Z" fill="#fffdf5"/></svg>
<div class="a" style="left:1655px;top:889px;width:84px;text-align:center;font-size:14px;line-height:20px;color:#fff;-webkit-text-stroke:0.25px #fff">查看评论</div>
<svg class="a" style="left:1744px;top:883px" width="84" height="33" viewBox="0 0 84 33"><path d="M1.8 0 H82.2 L84 6 V33 H0 V6Z" fill="#fbbd43"/><path d="M0 30.5 H84 V33 H0Z" fill="#dfa83b"/><path d="M21 30.6 L31.5 25.4 H52.5 L63 30.6Z" fill="#dfa83b"/><path d="M27 33 L30.5 29.6 H52.5 L56.5 33Z" fill="#fffdf5"/></svg>
<div class="a" style="left:1744px;top:889px;width:84px;text-align:center;font-size:14px;line-height:20px;color:#fff;-webkit-text-stroke:0.25px #fff">删除</div>
<div class="a" style="left:1900px;top:0;width:10px;height:918px;background:#f1f1f1"></div>
<div class="a" style="left:1903px;top:75px;width:7px;height:535px;background:#c1c1c1"></div>
<svg class="a" style="left:1905px;top:7px" width="8" height="5" viewBox="0 0 8 5"><path d="M4 0 L8 5 H0Z" fill="#505050"/></svg>
<svg class="a" style="left:1905px;top:909px" width="8" height="5" viewBox="0 0 8 5"><path d="M4 5 L8 0 H0Z" fill="#505050"/></svg>
</body></html>
